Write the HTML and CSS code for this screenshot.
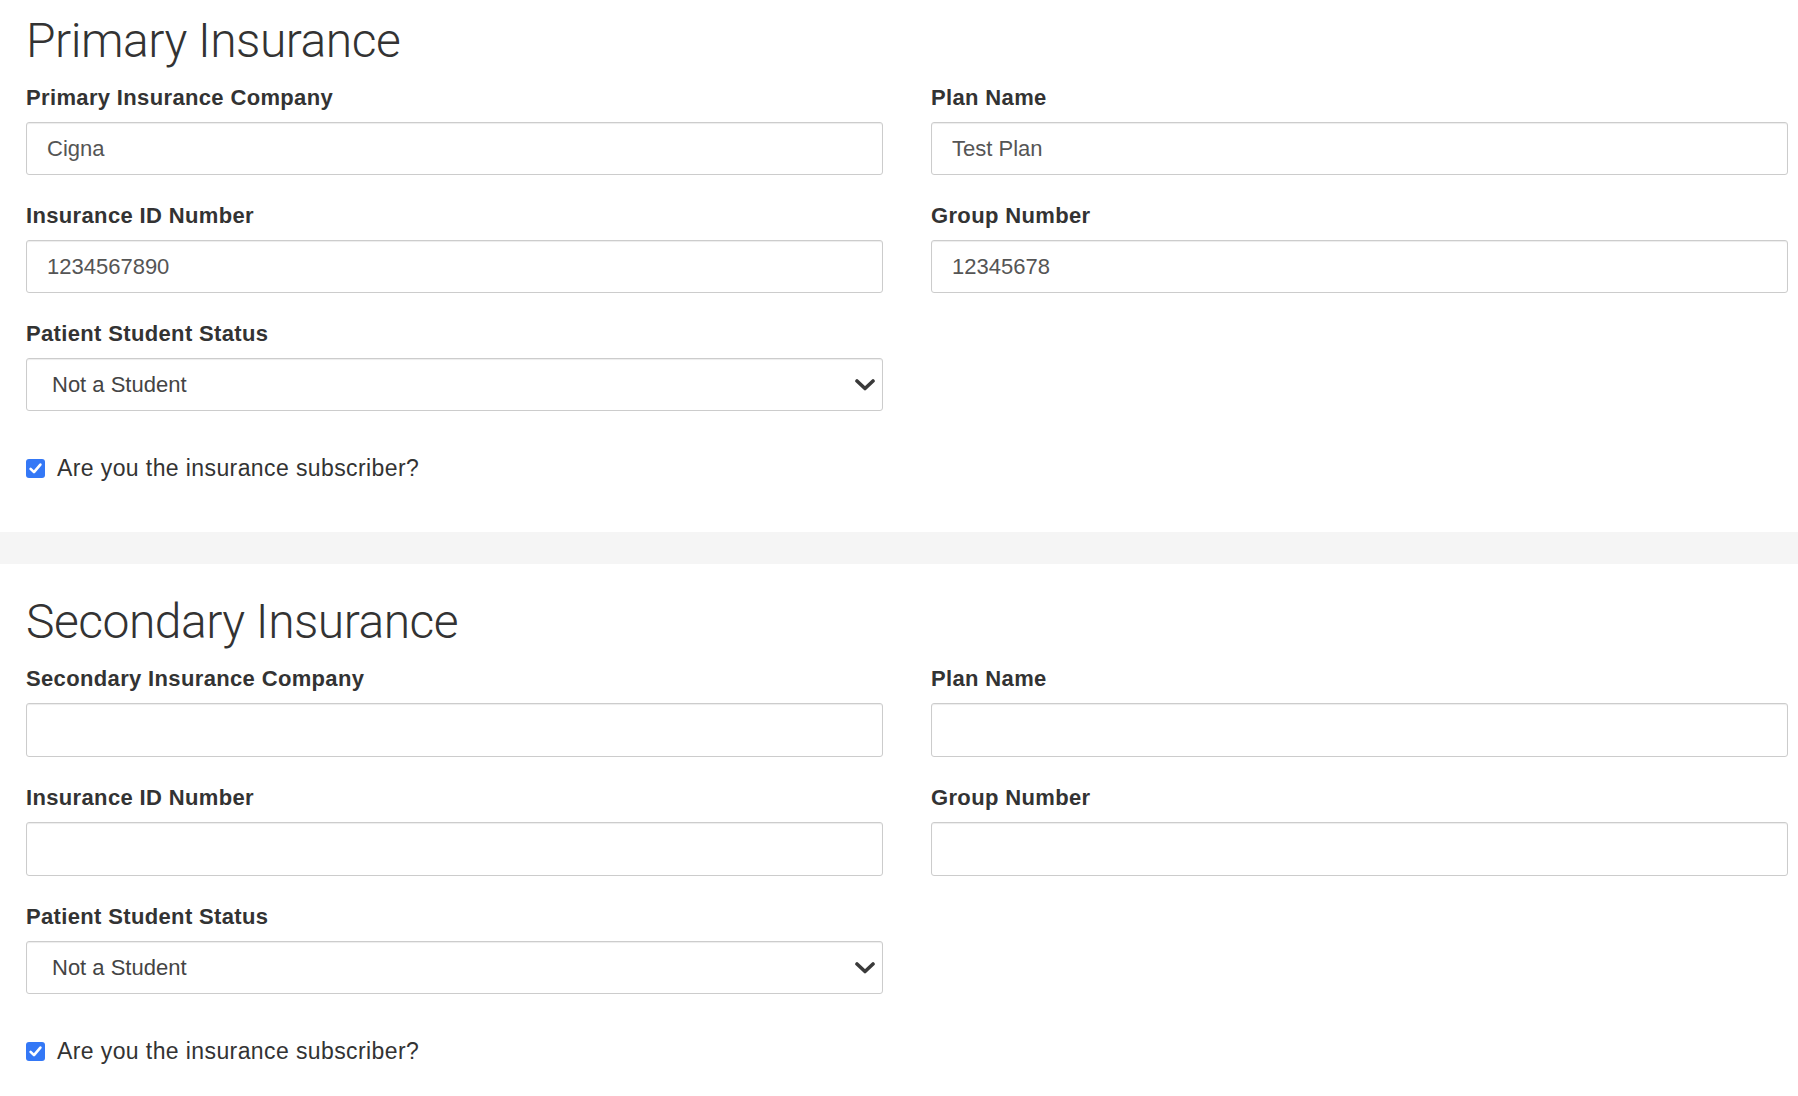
FILE: index.html
```html
<!DOCTYPE html>
<html lang="en">
<head>
<meta charset="utf-8">
<title>Insurance</title>
<link rel="stylesheet" href="styles.css">
</head>
<body>
<section class="section section-first">
  <h2 class="section-title">Primary Insurance</h2>
  <div class="form-grid">
    <div class="form-group">
      <label class="field-label">Primary Insurance Company</label>
      <input class="field-input" type="text" value="Cigna">
    </div>
    <div class="form-group">
      <label class="field-label">Plan Name</label>
      <input class="field-input" type="text" value="Test Plan">
    </div>
    <div class="form-group">
      <label class="field-label">Insurance ID Number</label>
      <input class="field-input" type="text" value="1234567890">
    </div>
    <div class="form-group">
      <label class="field-label">Group Number</label>
      <input class="field-input" type="text" value="12345678">
    </div>
    <div class="form-group">
      <label class="field-label">Patient Student Status</label>
      <div class="select-wrap">
        <select class="field-select"><option>Not a Student</option></select>
        <svg class="select-arrow" width="20" height="14" viewBox="0 0 20 14"><path d="M2 3 L10 10.5 L18 3" fill="none" stroke="#3a3a3a" stroke-width="3.6" stroke-linecap="round" stroke-linejoin="round"/></svg>
      </div>
    </div>
  </div>
  <label class="check-row">
    <span class="check-box"><svg width="19" height="19" viewBox="0 0 19 19"><path d="M4.6 9.8 L8 13.2 L14.4 5.6" fill="none" stroke="#fff" stroke-width="2.6" stroke-linecap="round" stroke-linejoin="round"/></svg></span>
    <span class="check-text">Are you the insurance subscriber?</span>
  </label>
</section>
<div class="divider"></div>
<section class="section section-second">
  <h2 class="section-title">Secondary Insurance</h2>
  <div class="form-grid">
    <div class="form-group">
      <label class="field-label">Secondary Insurance Company</label>
      <input class="field-input" type="text" value="">
    </div>
    <div class="form-group">
      <label class="field-label">Plan Name</label>
      <input class="field-input" type="text" value="">
    </div>
    <div class="form-group">
      <label class="field-label">Insurance ID Number</label>
      <input class="field-input" type="text" value="">
    </div>
    <div class="form-group">
      <label class="field-label">Group Number</label>
      <input class="field-input" type="text" value="">
    </div>
    <div class="form-group">
      <label class="field-label">Patient Student Status</label>
      <div class="select-wrap">
        <select class="field-select"><option>Not a Student</option></select>
        <svg class="select-arrow" width="20" height="14" viewBox="0 0 20 14"><path d="M2 3 L10 10.5 L18 3" fill="none" stroke="#3a3a3a" stroke-width="3.6" stroke-linecap="round" stroke-linejoin="round"/></svg>
      </div>
    </div>
  </div>
  <label class="check-row">
    <span class="check-box"><svg width="19" height="19" viewBox="0 0 19 19"><path d="M4.6 9.8 L8 13.2 L14.4 5.6" fill="none" stroke="#fff" stroke-width="2.6" stroke-linecap="round" stroke-linejoin="round"/></svg></span>
    <span class="check-text">Are you the insurance subscriber?</span>
  </label>
</section>
</body>
</html>
```
FILE: styles.css
```css
* { box-sizing: border-box; }
html, body {
  margin: 0;
  padding: 0;
  background: #fff;
}
body {
  font-family: "Liberation Sans", Arial, sans-serif;
  color: #333;
  width: 1798px;
  overflow: hidden;
}
.section {
  padding: 0 10px 0 26px;
}
.section-first { padding-top: 13px; padding-bottom: 49px; }
.section-second { padding-top: 30px; padding-bottom: 40px; }
.section-title {
  font-family: Roboto, "Liberation Sans", sans-serif;
  font-weight: 300;
  font-size: 48px;
  line-height: 56px;
  margin: 0 0 17px 0;
  color: #333;
  letter-spacing: -0.5px;
}
.form-grid {
  display: grid;
  grid-template-columns: 1fr 1fr;
  column-gap: 48px;
}
.form-group {
  margin-bottom: 29px;
}
.field-label {
  display: block;
  font-weight: bold;
  font-size: 22px;
  line-height: 24px;
  margin-bottom: 12px;
  color: #333;
  letter-spacing: 0.35px;
}
.field-input, .field-select {
  display: block;
  width: 100%;
  height: 53px;
  border: 1px solid #ccc;
  border-radius: 3px;
  box-shadow: inset 0 1px 1px rgba(0,0,0,0.075);
  background: #fff;
  font-family: "Liberation Sans", Arial, sans-serif;
  font-size: 22px;
  color: #555;
  padding: 0 20px;
  outline: none;
}
.section-second .field-input {
  height: 54px;
}
.select-wrap {
  position: relative;
}
.field-select {
  -webkit-appearance: none;
  appearance: none;
  padding-left: 25px;
  color: #444;
}
.select-arrow {
  position: absolute;
  right: 8px;
  top: 20px;
  pointer-events: none;
}
.check-row {
  display: flex;
  align-items: center;
  height: 30px;
  margin-top: 13px;
  gap: 12px;
}
.check-box {
  width: 19px;
  height: 19px;
  border-radius: 3px;
  background: #3478f6;
  display: flex;
}
.check-text {
  font-size: 23px;
  letter-spacing: 0.4px;
  color: #333;
}
.divider {
  height: 32px;
  background: #f5f5f5;
}
```
